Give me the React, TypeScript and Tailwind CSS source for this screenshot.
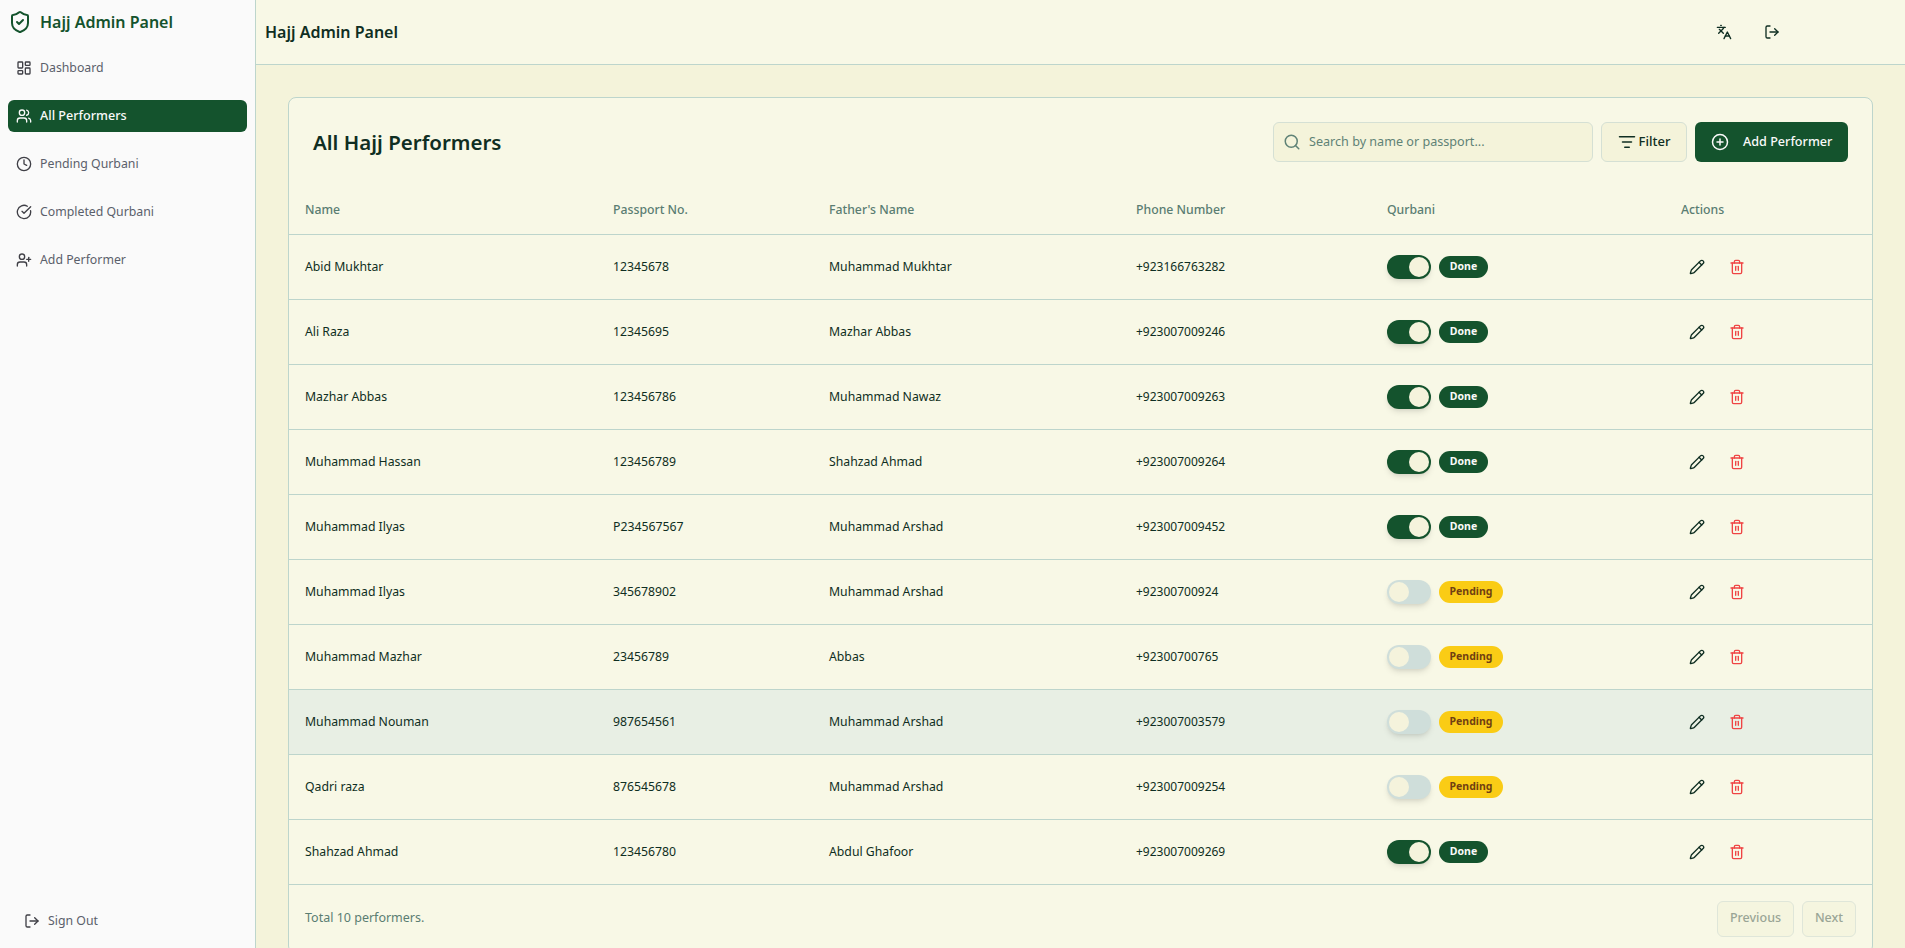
import { CircleCheckBig, CirclePlus, Clock, Languages, LayoutDashboard, ListFilter, LogOut, Pencil, Search, ShieldCheck, Trash2, UserPlus, Users } from "lucide-react";

type Performer = {
  name: string;
  passport: string;
  father: string;
  phone: string;
  done: boolean;
};

const performers: Performer[] = [
  { name: "Abid Mukhtar", passport: "12345678", father: "Muhammad Mukhtar", phone: "+923166763282", done: true },
  { name: "Ali Raza", passport: "12345695", father: "Mazhar Abbas", phone: "+923007009246", done: true },
  { name: "Mazhar Abbas", passport: "123456786", father: "Muhammad Nawaz", phone: "+923007009263", done: true },
  { name: "Muhammad Hassan", passport: "123456789", father: "Shahzad Ahmad", phone: "+923007009264", done: true },
  { name: "Muhammad Ilyas", passport: "P234567567", father: "Muhammad Arshad", phone: "+923007009452", done: true },
  { name: "Muhammad Ilyas", passport: "345678902", father: "Muhammad Arshad", phone: "+92300700924", done: false },
  { name: "Muhammad Mazhar", passport: "23456789", father: "Abbas", phone: "+92300700765", done: false },
  { name: "Muhammad Nouman", passport: "987654561", father: "Muhammad Arshad", phone: "+923007003579", done: false },
  { name: "Qadri raza", passport: "876545678", father: "Muhammad Arshad", phone: "+923007009254", done: false },
  { name: "Shahzad Ahmad", passport: "123456780", father: "Abdul Ghafoor", phone: "+923007009269", done: true },
];

const navItems = [
  { label: "Dashboard", icon: LayoutDashboard },
  { label: "All Performers", icon: Users, active: true },
  { label: "Pending Qurbani", icon: Clock },
  { label: "Completed Qurbani", icon: CircleCheckBig },
  { label: "Add Performer", icon: UserPlus },
];

const Sidebar = () => (
  <aside className="flex h-full w-[256px] shrink-0 flex-col border-r border-[#bdd5cc] bg-[#fafafa]">
    <div className="flex h-[44px] items-center gap-[8px] pl-[8px]">
      <ShieldCheck className="h-6 w-6 text-[#14532d]" strokeWidth={2} />
      <span className="text-[16px] font-semibold text-[#14532d]">Hajj Admin Panel</span>
    </div>
    <nav className="mt-[8px] flex flex-col gap-[16px] px-[8px]">
      {navItems.map((item) => (
        <div
          key={item.label}
          className={
            item.active
              ? "flex h-[32px] items-center gap-[8px] rounded-md bg-[#14532d] pl-[8px] text-[12.6px] font-medium text-[#fafafa]"
              : "flex h-[32px] items-center gap-[8px] rounded-md pl-[8px] text-[12.3px] text-[#5a5f6b]"
          }
        >
          <item.icon className={item.active ? "h-4 w-4" : "h-4 w-4 text-[#3f3f46]"} />
          <span>{item.label}</span>
        </div>
      ))}
    </nav>
    <div className="mt-auto flex items-center gap-[8px] pb-[18px] pl-[24px] text-[12.3px] text-[#5a5f6b]">
      <LogOut className="h-4 w-4 text-[#3f3f46]" />
      <span>Sign Out</span>
    </div>
  </aside>
);

const Row = ({ performer }: { performer: Performer }) => (
  <tr
    className={
      performer.name === "Muhammad Nouman"
        ? "h-[65px] border-b border-[#bdd5cc] bg-[#e8efe4] text-[12.25px] text-[#0f2e22]"
        : "h-[65px] border-b border-[#bdd5cc] text-[12.25px] text-[#0f2e22]"
    }
  >
    <td className="px-4 pt-[1px]">{performer.name}</td>
    <td className="px-4 pt-[1px]">{performer.passport}</td>
    <td className="px-4 pt-[1px]">{performer.father}</td>
    <td className="px-4 pt-[1px] text-[12px]">{performer.phone}</td>
    <td className="px-4">
      <div className="flex items-center gap-[8px]">
        {performer.done ? (
          <div className="flex h-[24px] w-[44px] items-center justify-end rounded-full bg-[#14532d] pr-[2px] shadow-md">
            <span className="h-[20px] w-[20px] rounded-full bg-[#f5f3dc]" />
          </div>
        ) : (
          <div className="flex h-[24px] w-[44px] items-center rounded-full bg-[#cfdeda] pl-[2px] shadow-md">
            <span className="h-[20px] w-[20px] rounded-full bg-[#f5f3dc]" />
          </div>
        )}
        {performer.done ? (
          <span className="flex h-[22px] w-[49px] items-center justify-center rounded-full bg-[#14532d] text-[10.5px] font-bold text-[#fafafa]">Done</span>
        ) : (
          <span className="flex h-[22px] w-[64px] items-center justify-center rounded-full bg-[#facc15] text-[10.5px] font-bold text-[#713f12]">Pending</span>
        )}
      </div>
    </td>
    <td className="px-4">
      <div className="flex items-center gap-[24px] pl-[8px]">
        <Pencil className="h-4 w-4 text-[#0f2e22]" />
        <Trash2 className="h-4 w-4 text-[#ef4444]" />
      </div>
    </td>
  </tr>
);

export default function App() {
  return (
    <div className="flex h-screen overflow-hidden bg-[#f4f3da] font-['Noto_Sans',sans-serif]">
      <Sidebar />
      <div className="flex min-w-0 flex-1 flex-col">
        <header className="flex h-[65px] shrink-0 items-center border-b border-[#bdd5cc] bg-[#f8f8e6] pl-[9px]">
          <h1 className="text-[16px] font-semibold text-[#0f2e22]">Hajj Admin Panel</h1>
          <div className="ml-auto flex items-center gap-[32px] pr-[125px]">
            <Languages className="h-4 w-4 text-[#0f2e22]" />
            <LogOut className="h-4 w-4 text-[#0f2e22]" />
          </div>
        </header>
        <main className="min-h-0 flex-1 overflow-hidden p-[32px]">
          <section className="rounded-lg border border-[#bdd5cc] bg-[#f8f8e6]">
            <div className="flex h-[88px] items-center justify-between px-[24px]">
              <h2 className="text-[20.5px] font-semibold text-[#0f2e22]">All Hajj Performers</h2>
              <div className="flex items-center gap-[8px]">
                <div className="flex h-[40px] w-[320px] items-center gap-[8px] rounded-md border border-[#d5e0d4] bg-[#f4f3da] pl-[9px] text-[12.6px] text-[#5f8276]">
                  <Search className="h-[18px] w-[18px]" />
                  <span>Search by name or passport...</span>
                </div>
                <button className="flex h-[40px] w-[86px] items-center justify-center gap-[3px] rounded-md border border-[#d5e0d4] bg-[#f4f3da] text-[13px] font-medium text-[#0f2e22]">
                  <ListFilter className="h-[18px] w-[18px]" />
                  Filter
                </button>
                <button className="flex h-[40px] w-[153px] items-center gap-[14px] whitespace-nowrap rounded-md bg-[#14532d] pl-[16px] text-[12.6px] font-medium text-[#fafafa]">
                  <CirclePlus className="h-[18px] w-[18px]" />
                  Add Performer
                </button>
              </div>
            </div>
            <table className="w-full table-fixed border-collapse">
              <thead>
                <tr className="h-[48px] border-b border-[#bdd5cc] text-left text-[12.25px] text-[#5a7d72]">
                  <th className="w-[308px] px-4 pt-[1px] font-medium">Name</th>
                  <th className="w-[216px] px-4 pt-[1px] font-medium">Passport No.</th>
                  <th className="w-[307px] px-4 pt-[1px] font-medium">Father's Name</th>
                  <th className="w-[251px] px-4 pt-[1px] font-medium">Phone Number</th>
                  <th className="w-[294px] px-4 pt-[1px] font-medium">Qurbani</th>
                  <th className="px-4 pt-[1px] font-medium">Actions</th>
                </tr>
              </thead>
              <tbody>
                {performers.map((performer) => (
                  <Row key={performer.phone} performer={performer} />
                ))}
              </tbody>
            </table>
            <div className="flex h-[68px] items-center justify-between px-[16px] text-[12.5px] text-[#5a7d72]">
              <span>Total 10 performers.</span>
              <div className="flex items-center gap-[8px]">
                <button className="h-[36px] w-[77px] rounded-md border border-[#dfe6d9] bg-[#f4f3da]/60 font-medium text-[#9aa596]">Previous</button>
                <button className="h-[36px] w-[54px] rounded-md border border-[#dfe6d9] bg-[#f4f3da]/60 font-medium text-[#9aa596]">Next</button>
              </div>
            </div>
          </section>
        </main>
      </div>
    </div>
  );
}
